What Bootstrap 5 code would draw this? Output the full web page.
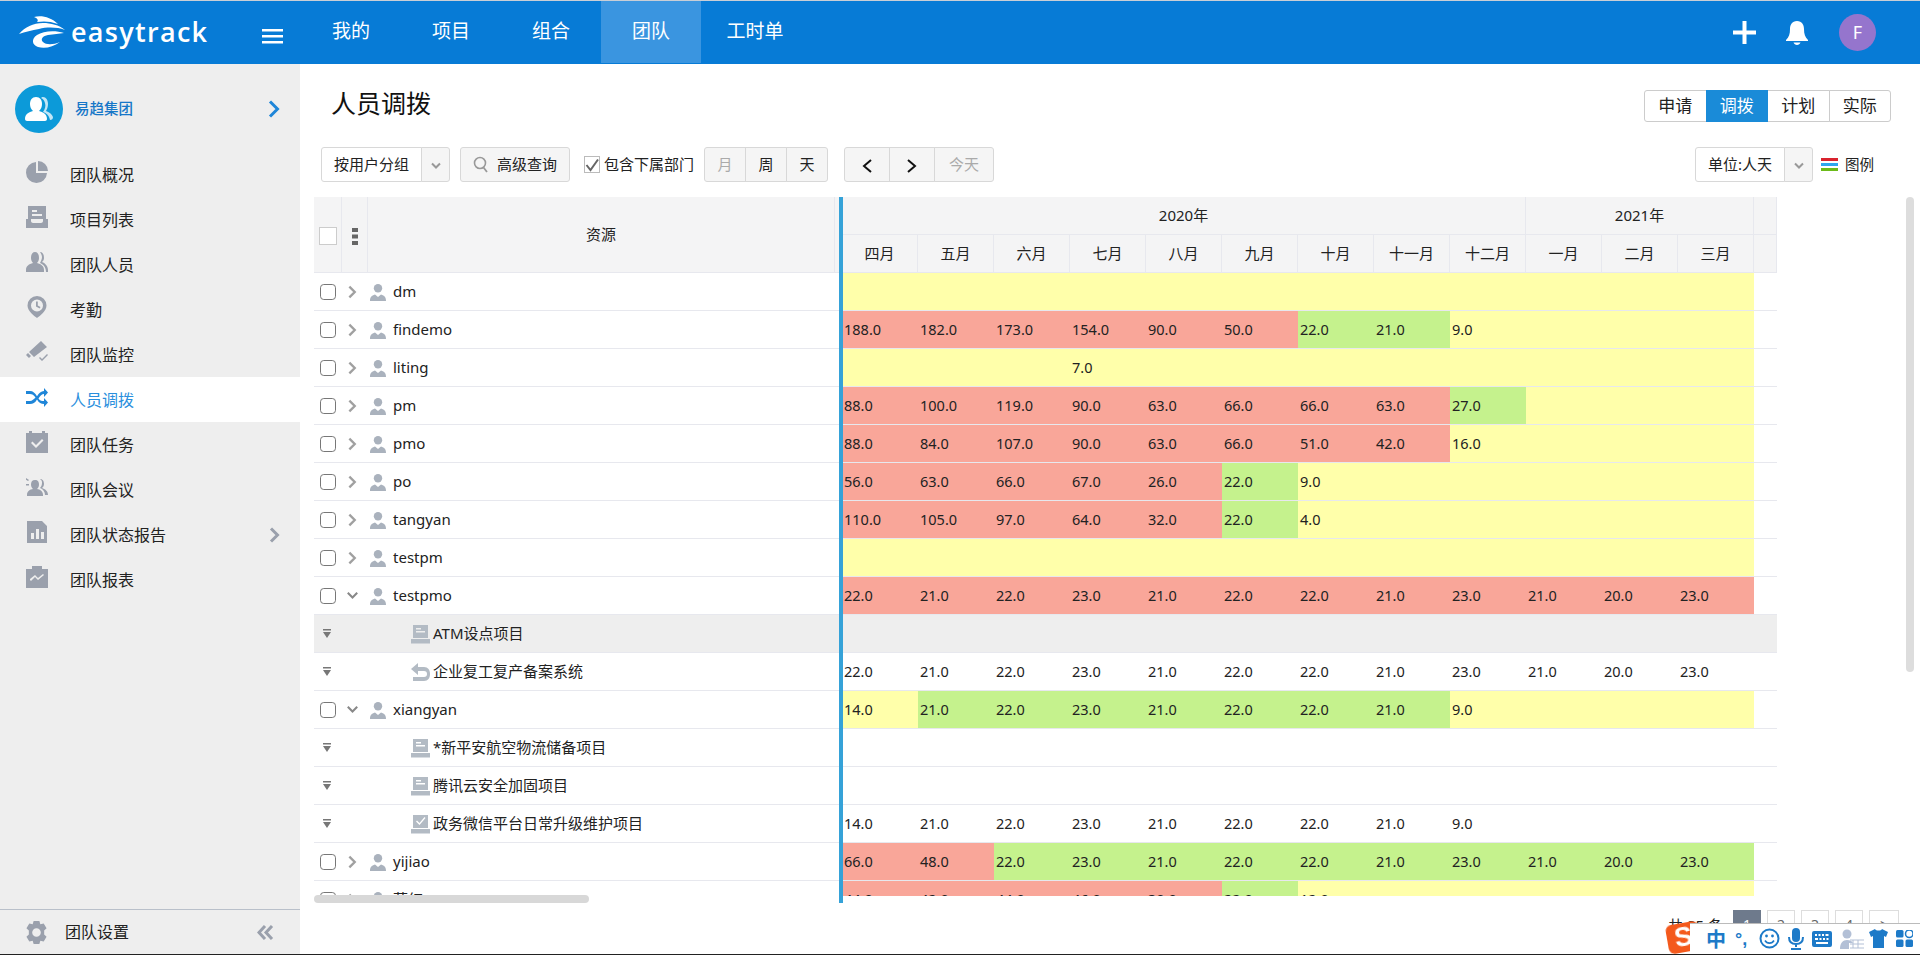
<!DOCTYPE html>
<html lang="zh-CN">
<head>
<meta charset="utf-8">
<title>人员调拨</title>
<link href="https://cdn.jsdelivr.net/npm/bootstrap@5.3.0/dist/css/bootstrap.min.css" rel="stylesheet">
<style>
html,body{height:100%;overflow:hidden}
body{font-family:"Noto Sans","Noto Sans CJK SC",sans-serif;font-size:15px;color:#222;background:#fff}
.app-shell{height:955px;border-bottom:1px solid #222}
.top-bar{height:64px;background:#077bd6;border-top:1px solid #c9ced6;flex:none;padding:0}
.brand-box{width:301px;height:63px;padding-left:19px;padding-right:18px;color:#fff}
.brand-glyph{margin-top:-2px;flex:none}
.brand-name{font-family:"Open Sans","Noto Sans",sans-serif;font-size:27px;line-height:1;font-weight:600;margin-left:6px;margin-top:-3px;letter-spacing:1.3px;color:#fff}
.top-link{display:block;height:62px;line-height:60px;width:100px;text-align:center;font-size:19px;color:#fff;text-decoration:none}
.top-link.wide{width:108px}
.top-link.on{background:#3a95e0}
.top-tools{padding-right:44px;gap:30px}
.user-dot{width:37px;height:37px;border-radius:50%;background:#9575cd;color:#fff;font-size:18px;line-height:37px;text-align:center;margin-left:1px}
.side-col{width:300px;background:#eee;flex:none}
.team-head{height:88px;padding:21px 15px 0}
.team-logo{width:48px;height:48px;border-radius:50%;background:#0c9ad9;flex:none}
.team-name{font-size:14.5px;color:#1677c8;margin-left:12px;font-weight:500;margin-top:13px}
.side-link{height:45px;padding-left:26px;color:#222;font-size:16px;text-decoration:none}
.side-link svg.ic{width:22px;height:22px;margin-right:22px;margin-top:-5px;fill:#9aa0ac;flex:none}
.side-link.on{background:#fff;color:#2b8fdd}
.side-link.on svg.ic{fill:#1f86d8}
.side-foot{height:45px;border-top:1px solid #b9c0ca;padding-left:25px;padding-right:26px;font-size:16px;margin-bottom:0}
.side-foot svg.ic{width:23px;height:23px;margin-right:17px;fill:#9aa0ac}
.work-col{padding-left:14px}
.head-row{height:58px;padding:26px 29px 0 17px}
.page-title{font-size:25px;line-height:32px;margin:-3px 0 0;font-weight:400;color:#111}
.tb-btn{--bs-btn-padding-x:0;--bs-btn-padding-y:0;--bs-btn-font-size:15px;--bs-btn-border-color:#d8d8d8;--bs-btn-bg:#f5f5f5;--bs-btn-color:#222;--bs-btn-border-radius:3px;--bs-btn-hover-bg:#f5f5f5;--bs-btn-hover-border-color:#d8d8d8;--bs-btn-disabled-color:#aaa;--bs-btn-disabled-bg:#f5f5f5;--bs-btn-disabled-border-color:#d8d8d8;--bs-btn-disabled-opacity:1;height:35px;line-height:33px}
.mode-btn{--bs-btn-bg:#fff;--bs-btn-border-color:#ccc;--bs-btn-hover-bg:#fff;--bs-btn-hover-border-color:#ccc;--bs-btn-active-bg:#1a8bd8;--bs-btn-active-border-color:#1a8bd8;--bs-btn-active-color:#fff;height:32px;line-height:30px;width:62.5px;font-size:17px}
.mode-btn.btn.active{z-index:1}
.tool-row{height:35px;margin-top:25px;padding:0 29px 0 7px}
.w-sel-a{width:101px;background:#fff}
.w-sel-b{width:90px;background:#fff}
.w-caret{width:29px}
.w-adv{width:110px;margin-left:10px}
.w-unit{width:42px}
.w-unit2{width:46px}
.w-next{width:60px}
.chk-label{font-size:15px;margin-left:14px;margin-right:10px;white-space:nowrap}
.chk-box{width:16px;height:17px;border:1px solid #bbb;background:#fff;margin-right:4px;display:inline-flex;align-items:center;justify-content:center}
.legend-txt{font-size:14.5px;margin-left:7px;margin-right:17px}
.sheet-area{height:706px;margin-top:15px;position:relative}
.pane{height:699px;overflow:hidden;flex:none}
.pane-l{width:525px}
.pane-r{width:935px;margin-left:-1px}
.split-bar{width:4px;height:706px;background:#35a2d8;flex:none;position:relative;z-index:2}
.sheet{--bs-table-bg:transparent;table-layout:fixed;border-collapse:separate;border-spacing:0;margin:0;width:auto}
.sheet>:not(caption)>*>*{padding:0;height:38px;border-bottom:1px solid #e7e8ee;vertical-align:middle;white-space:nowrap;color:#222;font-weight:400;overflow:hidden}
.sheet th{--bs-table-bg:#f4f4f5;text-align:center;font-size:15px}
.sheet th.bd{border-right:1px solid #e7e8ee}
.sheet td{line-height:37px}
.sheet-r td{padding-left:2px!important;font-size:14.5px}
.sheet td.rd{--bs-table-bg:#f9a699}
.sheet td.gn{--bs-table-bg:#c5f28d}
.sheet td.yl{--bs-table-bg:#ffffaa}
.sheet tr.grey td{--bs-table-bg:#eee}
.row-chk{width:16px;height:16px;border:1px solid #777;border-radius:3px;margin:0;display:block;margin-left:6px;--bs-border-color:#777}
.head-chk{width:18px;height:18px;border:1px solid #ccc;background:#fff;display:block;margin-left:5px;margin-top:2px}
.chev-r{display:block;margin-left:6px}
.chev-d{display:block;margin-left:5px}
.flt{display:block;margin-left:9px}
.nm{display:flex;align-items:center;font-size:15px}
.nm .pi{width:18px;height:18px;margin-right:6px;margin-left:1px;fill:#aab2bd}
.nm-sub{display:flex;align-items:center;font-size:15px;padding-left:43px}
.nm-sub svg{width:19px;height:20px;margin-right:3px;fill:#b3bbc4;flex:none}
.h-scroll{position:absolute;left:0;bottom:0;width:275px;height:8px;border-radius:4px;background:#d8d8d8}
.v-scroll{position:absolute;right:6px;top:133px;width:8px;height:475px;border-radius:4px;background:#ddd}
.page-row{margin-top:7px;padding-right:21px;gap:6px;font-size:15px}
.pg{display:block;width:28px;height:30px;line-height:28px;text-align:center;border:1px solid #ddd;color:#666;font-size:14px;text-decoration:none;flex:none}
.pg.on{background:#6e7a8c;color:#fff;border-color:#6e7a8c}
.pg.last{width:30px}
.ime-bar{position:fixed;left:1690px;top:923px;width:230px;height:30px;background:#fff;border-top:1px solid #bbb;padding-left:16px}
.ime-logo{position:fixed;left:1667px;top:923px;width:33px;height:29px;background:#f4591c;border-radius:6px;transform:rotate(-10deg);color:#fff;font:700 27px/28px "Liberation Sans",sans-serif;text-align:center}
.ime-ch{font:700 20px/28px "Noto Sans CJK SC",sans-serif;color:#1d7ac8;width:29px}
.ime-p{font:700 18px/24px "Liberation Sans",sans-serif;color:#1d7ac8;width:24px}
.ime-bar svg{flex:none;fill:#1d7ac8}
.ime-gap{margin-right:8px}
.ime-gap-sm{margin-right:5px}
</style>
</head>
<body>
<svg width="0" height="0" class="position-absolute">
<defs>
<symbol id="i-person" viewBox="0 0 18 18"><circle cx="9" cy="5.2" r="4.2"/><path d="M1 18c0-4 1.500-5.500 5-6.500l3 2.500 3-2.500c3.500 1 5 2.500 5 6.500z"/></symbol>
<symbol id="i-proj" viewBox="0 0 19 20"><path d="M2 1h15v13H2zM5 4v1.500h5V4zM5 7v1.500h9V7z" fill-rule="evenodd"/><path d="M0 15h19v4.500H0z"/></symbol>
<symbol id="i-undo" viewBox="0 0 19 20"><path d="M7 1 0 7l7 6V9h6c2 0 3 1 3 3s-1 3-3 3H2v4h11c4 0 6-3 6-7s-2-7-6-7H7z"/></symbol>
<symbol id="i-done" viewBox="0 0 19 20"><path d="M2 1h15v13H2zM5 7.500l3.500 3.500L14.500 4l-1-1-5 6-2.500-2.500z" fill-rule="evenodd"/><path d="M0 15h19v4.500H0z"/></symbol>
<symbol id="i-chev" viewBox="0 0 10 14"><path d="M1.500 1 7.500 7l-6 6" fill="none" stroke="#a0a0a0" stroke-width="2.600"/></symbol>
<symbol id="i-down" viewBox="0 0 14 10"><path d="M1 1.500 7 7.500l6-6" fill="none" stroke="#888" stroke-width="2.600"/></symbol>
<symbol id="i-filter" viewBox="0 0 8 10"><path d="M0 0h8v1.500H0zM0 3h8L4 9z" fill="#777"/></symbol>
<symbol id="i-caret" viewBox="0 0 10 8"><path d="M1 1.500 5 5.500l4-4" fill="none" stroke="#999" stroke-width="2"/></symbol>
</defs>
</svg>

<div class="app-shell d-flex flex-column">
  <nav class="top-bar navbar d-flex align-items-center flex-nowrap">
    <div class="brand-box d-flex align-items-center">
      <svg class="brand-glyph" width="46" height="34" viewBox="0 0 46 34" fill="#fff"><path d="M15 2C22 0 32 2 39 9 31 6 24 6 18 7 20 5 18 3 15 2z"/><path d="M0 19C6 12 14 8 24 8 32 8 40 10 46 15 38 12 28 12 20 14 13 15 6 17 0 19z"/><path d="M45 18C36 15 24 16 18 20 12 24 13 30 19 32 26 34 34 32 41 27 34 30 27 30 24 27 21 24 24 21 29 20 35 19 40 19 45 18z"/></svg>
      <span class="brand-name">easytrack</span>
      <svg class="ms-auto" width="21" height="15" viewBox="0 0 21 15" fill="#fff" style="margin-top:8px"><path d="M0 0h21v2.500H0zM0 6h21v2.500H0zM0 12h21v2.500H0z"/></svg>
    </div>
    <ul class="navbar-nav flex-row flex-grow-1 align-self-start">
      <li><a class="top-link" href="#">我的</a></li>
      <li><a class="top-link" href="#">项目</a></li>
      <li><a class="top-link" href="#">组合</a></li>
      <li><a class="top-link on" href="#">团队</a></li>
      <li><a class="top-link wide" href="#">工时单</a></li>
    </ul>
    <div class="top-tools d-flex align-items-center">
      <svg width="23" height="23" viewBox="0 0 23 23" fill="#fff"><path d="M9.500 0h4v9.500H23v4h-9.500V23h-4v-9.500H0v-4h9.500z"/></svg>
      <svg width="22" height="24" viewBox="0 0 22 24" fill="#fff"><path d="M11 0c5 0 7 4 7 8 0 5 1 8 4 11v1H0v-1c3-3 4-6 4-11 0-4 2-8 7-8zM7.500 21.500h7C14 23 12.500 24 11 24s-3-1-3.500-2.500z"/></svg>
      <div class="user-dot">F</div>
    </div>
  </nav>

  <div class="d-flex flex-grow-1" style="min-height:0">
    <aside class="side-col d-flex flex-column">
      <div class="team-head d-flex align-items-start">
        <div class="team-logo d-flex align-items-center justify-content-center">
          <svg width="30" height="30" viewBox="0 0 30 30" fill="#fff"><path d="M19 3c3 0 5 3 5 7 0 3-1 5-2 7 3 1 6 3 7 6 0 2-1 3-3 3-1-5-4-7-7-8 2-3 3-6 2-9-1-3-2-4-4-5 1-1 1-1 2-1z" opacity=".75"/><path d="M12 3c4 0 6 3 6 7 0 3-1 5-3 7 4 1 8 3 8 8 0 1-1 2-2 2H3c-1 0-2-1-2-2 0-5 4-7 8-8-2-2-3-4-3-7 0-4 2-7 6-7z"/></svg>
        </div>
        <span class="team-name flex-grow-1">易趋集团</span>
        <svg width="12" height="18" viewBox="0 0 12 18" style="margin-top:15px;margin-right:5px"><path d="M2 1.500 9.500 9 2 16.500" fill="none" stroke="#1f86d8" stroke-width="3"/></svg>
      </div>
      <nav class="nav flex-column flex-grow-1">
        <a class="side-link d-flex align-items-center" href="#"><svg class="ic" viewBox="0 0 22 22"><path d="M10 1v11h11A10.500 10.500 0 1 1 10 1z"/><path d="M12 0a10 10 0 0 1 10 10H12z"/></svg>团队概况</a>
        <a class="side-link d-flex align-items-center" href="#"><svg class="ic" viewBox="0 0 22 22"><path d="M2 0h18v13H2zM6 4v2h5V4zM6 8v2h10V8z" fill-rule="evenodd"/><path d="M0 13h5v2c0 1 1 2 2 2h8c1 0 2-1 2-2v-2h5v9H0z"/></svg>项目列表</a>
        <a class="side-link d-flex align-items-center" href="#"><svg class="ic" viewBox="0 0 22 22"><path d="M9 1c3 0 4 3 4 6 0 2-1 4-2 5 4 1 7 3 7 7v2H0v-2c0-4 3-6 7-7-1-1-2-3-2-5 0-3 1-6 4-6z"/><path d="M14 1c3 0 4 3 4 6 0 2-1 3-2 4 3 1 6 4 6 8v2h-2c0-5-3-8-6-9 1-2 2-4 2-6 0-2-1-3-2-5z"/></svg>团队人员</a>
        <a class="side-link d-flex align-items-center" href="#"><svg class="ic" viewBox="0 0 22 22"><path d="M11 0a9.500 9.500 0 0 1 9.500 9.500C20.500 15 14 20 11 22 8 20 1.500 15 1.500 9.500A9.500 9.500 0 0 1 11 0zM11 3.500a6 6 0 1 0 0 12 6 6 0 0 0 0-12zM10 5.500h1.800v4l2.700 1.500-.8 1.400L10 10.500z" fill-rule="evenodd"/></svg>考勤</a>
        <a class="side-link d-flex align-items-center" href="#"><svg class="ic" viewBox="0 0 22 22"><path d="M15 0l6 6L8 16l-5-5zM0 14l2-2 3 3-2 2zM14 16l2 2 5-5 1 1-6 6-3-3z"/></svg>团队监控</a>
        <a class="side-link on d-flex align-items-center" href="#"><svg class="ic" viewBox="0 0 22 22"><path d="M0 5h4c3 0 5 2 7 5.200 2-3 4-5.200 7-5.200V2l4 4.500-4 4.500V8c-2 0-4 2-5.500 4.500C14 15 16 15 18 15v-3l4 4.500-4 4.500v-3c-3 0-5-1-7-4.500C9 17 7 18 4 18H0v-3h4c2 0 4-2 5.500-3.500C8 9 6 8 4 8H0z"/></svg>人员调拨</a>
        <a class="side-link d-flex align-items-center" href="#"><svg class="ic" viewBox="0 0 22 22"><path d="M3 0h3v2h10V0h3v2h3v20H0V2h3zM5 12l1.500-1.500L10 14l6-6 1.500 1.500L10 17z" fill-rule="evenodd"/></svg>团队任务</a>
        <a class="side-link d-flex align-items-center" href="#"><svg class="ic" viewBox="0 0 22 22"><path d="M9 4c3 0 4 2 4 4.500S12 12 11 13c3 .5 6 2 6 6v1H1v-1c0-4 3-5.500 6-6-1-1-2-2-2-4.500S6 4 9 4z"/><path d="M14 3c3 0 4 2.500 4 5 0 2-1 3-2 4 3 1 6 3 6 7h-3c0-3-2-6-5-7 1-1 2-3 2-5 0-1.500 0-2.500-2-4zM0 2l3 2-1 1-3-2zM0 8h3v1.500H0z"/></svg>团队会议</a>
        <a class="side-link d-flex align-items-center" href="#"><svg class="ic" viewBox="0 0 22 22"><path d="M1 0h15l5 5v17H1zM5 12v6h3v-6zM10 8v10h3V8zM15 11v7h3v-7z" fill-rule="evenodd"/></svg>团队状态报告<svg class="ms-auto" width="11" height="16" viewBox="0 0 11 16" style="margin-right:20px"><path d="M2 1.500 8.500 8 2 14.500" fill="none" stroke="#9aa0ac" stroke-width="3"/></svg></a>
        <a class="side-link d-flex align-items-center" href="#"><svg class="ic" viewBox="0 0 22 22"><path d="M0 3h6V0h10v3h6v19H0zM4 14l1 1 4-4 3 3 6-5-1-1-5 4-3-3-5 4z" fill-rule="evenodd"/></svg>团队报表</a>
      </nav>
      <div class="side-foot d-flex align-items-center">
        <svg class="ic" viewBox="0 0 24 24"><path d="M9 0h6l1 3.500 3.500-1 3 5-2.500 2.500v4l2.500 2.500-3 5-3.500-1L15 24H9l-1-3.500-3.500 1-3-5L4 14v-4L1.500 7.500l3-5 3.500 1zM12 7.500a4.500 4.500 0 1 0 0 9 4.500 4.500 0 0 0 0-9z" fill-rule="evenodd"/></svg>
        <span class="flex-grow-1">团队设置</span>
        <svg width="17" height="15" viewBox="0 0 17 15"><path d="M8 1 2 7.500 8 14M15 1 9 7.500l6 6.500" fill="none" stroke="#9aa0ac" stroke-width="3"/></svg>
      </div>
    </aside>

    <main class="work-col flex-grow-1 position-relative" style="min-width:0">
      <div class="head-row d-flex justify-content-between align-items-start">
        <h1 class="page-title">人员调拨</h1>
        <div class="btn-group">
          <button class="btn tb-btn mode-btn">申请</button>
          <button class="btn tb-btn mode-btn active">调拨</button>
          <button class="btn tb-btn mode-btn">计划</button>
          <button class="btn tb-btn mode-btn">实际</button>
        </div>
      </div>
      <div class="tool-row d-flex align-items-center">
        <div class="btn-group">
          <button class="btn tb-btn w-sel-a">按用户分组</button>
          <button class="btn tb-btn w-caret"><svg width="10" height="8"><use href="#i-caret"/></svg></button>
        </div>
        <button class="btn tb-btn w-adv d-flex align-items-center justify-content-center gap-2">
          <svg width="16" height="18" viewBox="0 0 16 18"><circle cx="7" cy="7" r="5.500" fill="none" stroke="#999" stroke-width="1.600"/><path d="M10.500 11.500 14 16" stroke="#999" stroke-width="1.800"/></svg>高级查询
        </button>
        <label class="chk-label d-flex align-items-center">
          <span class="chk-box"><svg width="14" height="14" viewBox="0 0 14 14"><path d="M1.500 7 5.500 12 13 1.500" fill="none" stroke="#666" stroke-width="2"/></svg></span>包含下属部门
        </label>
        <div class="btn-group">
          <button class="btn tb-btn w-unit" disabled>月</button>
          <button class="btn tb-btn w-unit">周</button>
          <button class="btn tb-btn w-unit">天</button>
        </div>
        <div class="btn-group ms-3">
          <button class="btn tb-btn w-unit2"><svg width="12" height="16" viewBox="0 0 12 16"><path d="M10 2 3 8l7 6" fill="none" stroke="#111" stroke-width="2"/></svg></button>
          <button class="btn tb-btn w-unit2"><svg width="12" height="16" viewBox="0 0 12 16"><path d="M2 2l7 6-7 6" fill="none" stroke="#111" stroke-width="2"/></svg></button>
          <button class="btn tb-btn w-next" disabled>今天</button>
        </div>
        <div class="btn-group ms-auto">
          <button class="btn tb-btn w-sel-b">单位:人天</button>
          <button class="btn tb-btn w-caret"><svg width="10" height="8"><use href="#i-caret"/></svg></button>
        </div>
        <svg class="ms-2" width="17" height="14" viewBox="0 0 17 14"><rect width="17" height="3" fill="#d9232e"/><rect y="5" width="17" height="3" fill="#2ea6ee"/><rect y="10" width="17" height="3" fill="#6cbb1a"/></svg>
        <span class="legend-txt">图例</span>
      </div>

      <div class="sheet-area d-flex">
        <div class="pane pane-l">
          <table class="table table-borderless sheet sheet-l">
            <colgroup><col style="width:28px"><col style="width:26px"><col style="width:467px"><col style="width:4px"></colgroup>
            <thead>
              <tr style="height:76px">
                <th class="bd" style="height:76px"><span class="head-chk"></span></th>
                <th class="bd"><svg width="6" height="17" viewBox="0 0 6 17" fill="#666"><path d="M0 0h6v4H0zM0 6.500h6v4H0zM0 13h6v4H0z"/></svg></th>
                <th class="bd">资源</th>
                <th></th>
              </tr>
            </thead>
            <tbody>
              <tr><td><input class="form-check-input row-chk" type="checkbox"></td><td><svg class="chev-r" width="9" height="14"><use href="#i-chev"/></svg></td><td colspan="2"><div class="nm"><svg class="pi"><use href="#i-person"/></svg>dm</div></td></tr>
              <tr><td><input class="form-check-input row-chk" type="checkbox"></td><td><svg class="chev-r" width="9" height="14"><use href="#i-chev"/></svg></td><td colspan="2"><div class="nm"><svg class="pi"><use href="#i-person"/></svg>findemo</div></td></tr>
              <tr><td><input class="form-check-input row-chk" type="checkbox"></td><td><svg class="chev-r" width="9" height="14"><use href="#i-chev"/></svg></td><td colspan="2"><div class="nm"><svg class="pi"><use href="#i-person"/></svg>liting</div></td></tr>
              <tr><td><input class="form-check-input row-chk" type="checkbox"></td><td><svg class="chev-r" width="9" height="14"><use href="#i-chev"/></svg></td><td colspan="2"><div class="nm"><svg class="pi"><use href="#i-person"/></svg>pm</div></td></tr>
              <tr><td><input class="form-check-input row-chk" type="checkbox"></td><td><svg class="chev-r" width="9" height="14"><use href="#i-chev"/></svg></td><td colspan="2"><div class="nm"><svg class="pi"><use href="#i-person"/></svg>pmo</div></td></tr>
              <tr><td><input class="form-check-input row-chk" type="checkbox"></td><td><svg class="chev-r" width="9" height="14"><use href="#i-chev"/></svg></td><td colspan="2"><div class="nm"><svg class="pi"><use href="#i-person"/></svg>po</div></td></tr>
              <tr><td><input class="form-check-input row-chk" type="checkbox"></td><td><svg class="chev-r" width="9" height="14"><use href="#i-chev"/></svg></td><td colspan="2"><div class="nm"><svg class="pi"><use href="#i-person"/></svg>tangyan</div></td></tr>
              <tr><td><input class="form-check-input row-chk" type="checkbox"></td><td><svg class="chev-r" width="9" height="14"><use href="#i-chev"/></svg></td><td colspan="2"><div class="nm"><svg class="pi"><use href="#i-person"/></svg>testpm</div></td></tr>
              <tr><td><input class="form-check-input row-chk" type="checkbox"></td><td><svg class="chev-d" width="11" height="9"><use href="#i-down"/></svg></td><td colspan="2"><div class="nm"><svg class="pi"><use href="#i-person"/></svg>testpmo</div></td></tr>
              <tr class="grey"><td><svg class="flt" width="8" height="10"><use href="#i-filter"/></svg></td><td></td><td colspan="2"><div class="nm-sub"><svg><use href="#i-proj"/></svg>ATM设点项目</div></td></tr>
              <tr><td><svg class="flt" width="8" height="10"><use href="#i-filter"/></svg></td><td></td><td colspan="2"><div class="nm-sub"><svg><use href="#i-undo"/></svg>企业复工复产备案系统</div></td></tr>
              <tr><td><input class="form-check-input row-chk" type="checkbox"></td><td><svg class="chev-d" width="11" height="9"><use href="#i-down"/></svg></td><td colspan="2"><div class="nm"><svg class="pi"><use href="#i-person"/></svg>xiangyan</div></td></tr>
              <tr><td><svg class="flt" width="8" height="10"><use href="#i-filter"/></svg></td><td></td><td colspan="2"><div class="nm-sub"><svg><use href="#i-proj"/></svg>*新平安航空物流储备项目</div></td></tr>
              <tr><td><svg class="flt" width="8" height="10"><use href="#i-filter"/></svg></td><td></td><td colspan="2"><div class="nm-sub"><svg><use href="#i-proj"/></svg>腾讯云安全加固项目</div></td></tr>
              <tr><td><svg class="flt" width="8" height="10"><use href="#i-filter"/></svg></td><td></td><td colspan="2"><div class="nm-sub"><svg><use href="#i-done"/></svg>政务微信平台日常升级维护项目</div></td></tr>
              <tr><td><input class="form-check-input row-chk" type="checkbox"></td><td><svg class="chev-r" width="9" height="14"><use href="#i-chev"/></svg></td><td colspan="2"><div class="nm"><svg class="pi"><use href="#i-person"/></svg>yijiao</div></td></tr>
              <tr><td><input class="form-check-input row-chk" type="checkbox"></td><td><svg class="chev-r" width="9" height="14"><use href="#i-chev"/></svg></td><td colspan="2"><div class="nm"><svg class="pi"><use href="#i-person"/></svg>蒋红</div></td></tr>
            </tbody>
          </table>
        </div>
        <div class="split-bar"></div>
        <div class="pane pane-r">
          <table class="table table-borderless sheet sheet-r">
            <colgroup><col style="width:76px"><col style="width:76px"><col style="width:76px"><col style="width:76px"><col style="width:76px"><col style="width:76px"><col style="width:76px"><col style="width:76px"><col style="width:76px"><col style="width:76px"><col style="width:76px"><col style="width:76px"><col style="width:23px"></colgroup>
            <thead>
              <tr><th colspan="9" class="bd">2020年</th><th colspan="3" class="bd">2021年</th><th class="bd"></th></tr>
              <tr><th class="bd">四月</th><th class="bd">五月</th><th class="bd">六月</th><th class="bd">七月</th><th class="bd">八月</th><th class="bd">九月</th><th class="bd">十月</th><th class="bd">十一月</th><th class="bd">十二月</th><th class="bd">一月</th><th class="bd">二月</th><th class="bd">三月</th><th class="bd"></th></tr>
            </thead>
            <tbody>
              <tr><td class="yl"></td><td class="yl"></td><td class="yl"></td><td class="yl"></td><td class="yl"></td><td class="yl"></td><td class="yl"></td><td class="yl"></td><td class="yl"></td><td class="yl"></td><td class="yl"></td><td class="yl"></td><td></td></tr>
              <tr><td class="rd">188.0</td><td class="rd">182.0</td><td class="rd">173.0</td><td class="rd">154.0</td><td class="rd">90.0</td><td class="rd">50.0</td><td class="gn">22.0</td><td class="gn">21.0</td><td class="yl">9.0</td><td class="yl"></td><td class="yl"></td><td class="yl"></td><td></td></tr>
              <tr><td class="yl"></td><td class="yl"></td><td class="yl"></td><td class="yl">7.0</td><td class="yl"></td><td class="yl"></td><td class="yl"></td><td class="yl"></td><td class="yl"></td><td class="yl"></td><td class="yl"></td><td class="yl"></td><td></td></tr>
              <tr><td class="rd">88.0</td><td class="rd">100.0</td><td class="rd">119.0</td><td class="rd">90.0</td><td class="rd">63.0</td><td class="rd">66.0</td><td class="rd">66.0</td><td class="rd">63.0</td><td class="gn">27.0</td><td class="yl"></td><td class="yl"></td><td class="yl"></td><td></td></tr>
              <tr><td class="rd">88.0</td><td class="rd">84.0</td><td class="rd">107.0</td><td class="rd">90.0</td><td class="rd">63.0</td><td class="rd">66.0</td><td class="rd">51.0</td><td class="rd">42.0</td><td class="yl">16.0</td><td class="yl"></td><td class="yl"></td><td class="yl"></td><td></td></tr>
              <tr><td class="rd">56.0</td><td class="rd">63.0</td><td class="rd">66.0</td><td class="rd">67.0</td><td class="rd">26.0</td><td class="gn">22.0</td><td class="yl">9.0</td><td class="yl"></td><td class="yl"></td><td class="yl"></td><td class="yl"></td><td class="yl"></td><td></td></tr>
              <tr><td class="rd">110.0</td><td class="rd">105.0</td><td class="rd">97.0</td><td class="rd">64.0</td><td class="rd">32.0</td><td class="gn">22.0</td><td class="yl">4.0</td><td class="yl"></td><td class="yl"></td><td class="yl"></td><td class="yl"></td><td class="yl"></td><td></td></tr>
              <tr><td class="yl"></td><td class="yl"></td><td class="yl"></td><td class="yl"></td><td class="yl"></td><td class="yl"></td><td class="yl"></td><td class="yl"></td><td class="yl"></td><td class="yl"></td><td class="yl"></td><td class="yl"></td><td></td></tr>
              <tr><td class="rd">22.0</td><td class="rd">21.0</td><td class="rd">22.0</td><td class="rd">23.0</td><td class="rd">21.0</td><td class="rd">22.0</td><td class="rd">22.0</td><td class="rd">21.0</td><td class="rd">23.0</td><td class="rd">21.0</td><td class="rd">20.0</td><td class="rd">23.0</td><td></td></tr>
              <tr class="grey"><td></td><td></td><td></td><td></td><td></td><td></td><td></td><td></td><td></td><td></td><td></td><td></td><td></td></tr>
              <tr><td>22.0</td><td>21.0</td><td>22.0</td><td>23.0</td><td>21.0</td><td>22.0</td><td>22.0</td><td>21.0</td><td>23.0</td><td>21.0</td><td>20.0</td><td>23.0</td><td></td></tr>
              <tr><td class="yl">14.0</td><td class="gn">21.0</td><td class="gn">22.0</td><td class="gn">23.0</td><td class="gn">21.0</td><td class="gn">22.0</td><td class="gn">22.0</td><td class="gn">21.0</td><td class="yl">9.0</td><td class="yl"></td><td class="yl"></td><td class="yl"></td><td></td></tr>
              <tr><td></td><td></td><td></td><td></td><td></td><td></td><td></td><td></td><td></td><td></td><td></td><td></td><td></td></tr>
              <tr><td></td><td></td><td></td><td></td><td></td><td></td><td></td><td></td><td></td><td></td><td></td><td></td><td></td></tr>
              <tr><td>14.0</td><td>21.0</td><td>22.0</td><td>23.0</td><td>21.0</td><td>22.0</td><td>22.0</td><td>21.0</td><td>9.0</td><td></td><td></td><td></td><td></td></tr>
              <tr><td class="rd">66.0</td><td class="rd">48.0</td><td class="gn">22.0</td><td class="gn">23.0</td><td class="gn">21.0</td><td class="gn">22.0</td><td class="gn">22.0</td><td class="gn">21.0</td><td class="gn">23.0</td><td class="gn">21.0</td><td class="gn">20.0</td><td class="gn">23.0</td><td></td></tr>
              <tr><td class="rd">44.0</td><td class="rd">42.0</td><td class="rd">44.0</td><td class="rd">46.0</td><td class="rd">30.0</td><td class="gn">22.0</td><td class="yl">12.0</td><td class="yl"></td><td class="yl"></td><td class="yl"></td><td class="yl"></td><td class="yl"></td><td></td></tr>
            </tbody>
          </table>
        </div>
        <div class="h-scroll"></div>
      </div>

      <div class="page-row d-flex justify-content-end align-items-start">
        <span class="me-1" style="line-height:30px">共 85 条</span>
        <a class="pg on" href="#">1</a><a class="pg" href="#">2</a><a class="pg" href="#">3</a><a class="pg" href="#">4</a><a class="pg last" href="#">&gt;</a>
      </div>
      <div class="v-scroll"></div>
    </main>
  </div>
</div>

<div class="ime-logo">S</div>
<div class="ime-bar d-flex align-items-center">
  <span class="ime-ch">中</span>
  <span class="ime-p">°,</span>
  <svg class="ime-gap" width="21" height="21" viewBox="0 0 21 21" style="fill:none"><circle cx="10.500" cy="10.500" r="9" stroke="#1d7ac8" stroke-width="2" fill="none"/><circle cx="7.500" cy="8" r="1.400" fill="#1d7ac8"/><circle cx="13.500" cy="8" r="1.400" fill="#1d7ac8"/><path d="M6 12.500c2 3.500 7 3.500 9 0" stroke="#1d7ac8" stroke-width="1.600" fill="none"/></svg>
  <svg class="ime-gap" width="16" height="22" viewBox="0 0 16 22"><rect x="4" width="8" height="14" rx="4"/><path d="M1 9c0 5 3 7 7 7s7-2 7-7M8 16v3M3 21h10" fill="none" stroke="#1d7ac8" stroke-width="2"/></svg>
  <svg class="ime-gap" width="20" height="16" viewBox="0 0 20 16"><path d="M2 0h16a2 2 0 0 1 2 2v12a2 2 0 0 1-2 2H2a2 2 0 0 1-2-2V2a2 2 0 0 1 2-2zM3 3v2h2V3zM6.500 3v2h2V3zM10 3v2h2V3zM13.500 3v2h3V3zM3 7v2h3V7zM7.500 7v2h2V7zM11 7v2h2V7zM14.500 7v2h2V7zM4 11v2h12v-2z" fill-rule="evenodd"/></svg>
  <svg class="ime-gap-sm" width="24" height="20" viewBox="0 0 24 20"><circle cx="7" cy="5" r="4.500" fill="#b3c0d6"/><path d="M0 20c0-6 3-9 7-9 3 0 5 1 6 3H9v6z" style="fill:#b3c0d6"/><path d="M10 11h14M10 15h14M10 19h14M13 11v8M18 11v8" stroke="#b3c0d6" fill="none"/></svg>
  <svg class="ime-gap" width="19" height="19" viewBox="0 0 19 19"><path d="M6 0c1 2 6 2 7 0l6 3-2 5-2-1v12H4V7L2 8 0 3z"/></svg>
  <svg width="17" height="17" viewBox="0 0 17 17"><rect width="7.500" height="7.500" rx="1.500"/><rect x="9.500" width="7.500" height="7.500" rx="3.700" style="fill:none;stroke:#1d7ac8;stroke-width:1.500"/><rect y="9.500" width="7.500" height="7.500" rx="1.500"/><rect x="9.500" y="9.500" width="7.500" height="7.500" rx="1.500"/></svg>
</div>
<script src="https://cdn.jsdelivr.net/npm/bootstrap@5.3.0/dist/js/bootstrap.bundle.min.js"></script>
</body>
</html>
